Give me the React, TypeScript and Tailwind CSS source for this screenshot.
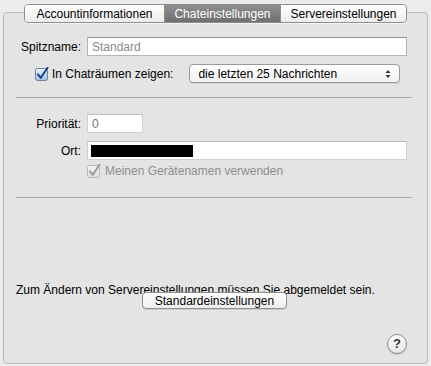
import React from "react";

function CheckBox({ disabled }: { disabled?: boolean }) {
  const stroke = disabled ? "#9a9a9a" : "#1f3f8f";
  return (
    <svg width="14" height="14" viewBox="0 0 14 14" className="shrink-0">
      <defs>
        <linearGradient id={disabled ? "cbd" : "cb"} x1="0" y1="0" x2="0" y2="1">
          <stop offset="0" stopColor={disabled ? "#f4f4f4" : "#eaf2fb"} />
          <stop offset="1" stopColor={disabled ? "#e0e0e0" : "#9fc3ea"} />
        </linearGradient>
      </defs>
      <rect x="0.5" y="1.5" width="12" height="12" rx="2" fill={`url(#${disabled ? "cbd" : "cb"})`} stroke={disabled ? "#b8b8b8" : "#6e7f99"} />
      <path d="M3 7.5 L5.8 10.8 L12.5 0.8" fill="none" stroke={stroke} strokeWidth="2" strokeLinecap="round" strokeLinejoin="round" />
    </svg>
  );
}

export default function App() {
  const tabs = [
    { label: "Accountinformationen", w: "w-[139px]" },
    { label: "Chateinstellungen", w: "w-[116px]", active: true },
    { label: "Servereinstellungen", w: "w-[126px]" },
  ];

  return (
    <div
      className="w-[431px] h-[366px] bg-[#ececec] pt-[12px] px-[3px] text-[12px] leading-[16px] text-black overflow-hidden"
      style={{ fontFamily: '"Liberation Sans", Arial, sans-serif' }}
    >
      <div className="h-[352px] border border-[#b9b9b9] rounded-[4px] bg-[#e4e4e4] flex flex-col">
        {/* tab strip */}
        <div className="-mt-[9px] self-center flex h-[19px] rounded-[4px] border border-[#8e8e8e] overflow-hidden shadow-[0_1px_0_rgba(255,255,255,0.6)]">
          {tabs.map((t, i) => (
            <div
              key={t.label}
              className={`${t.w} flex items-center justify-center ${
                t.active
                  ? "bg-gradient-to-b from-[#8f8f8f] to-[#6f6f6f] text-white"
                  : "bg-gradient-to-b from-white to-[#ececec] text-black"
              } ${i > 0 ? "border-l border-[#8e8e8e]" : ""}`}
            >
              {t.label}
            </div>
          ))}
        </div>

        {/* Spitzname */}
        <div className="mt-[14px] flex items-center">
          <div className="w-[77px] text-right">Spitzname:</div>
          <div className="ml-[6px] w-[320px] h-[19px] bg-white border border-[#b5b5b5] border-t-[#8f8f8f] pl-[4px] flex items-center text-[#8a8a8a]">
            Standard
          </div>
        </div>

        {/* Chaträume */}
        <div className="mt-[8px] flex items-center h-[19px]">
          <div className="ml-[31px] flex items-center gap-[3px]">
            <CheckBox />
            <span>In Chaträumen zeigen:</span>
          </div>
          <div className="ml-[16px] w-[211px] h-[19px] rounded-[4px] border border-[#9a9a9a] bg-gradient-to-b from-white to-[#f0f0f0] flex items-center pl-[8px] pr-[8px] shadow-[0_1px_0_rgba(0,0,0,0.08)]">
            <span className="flex-1">die letzten 25 Nachrichten</span>
            <svg width="6" height="10" viewBox="0 0 6 10">
              <path d="M0.5 4 L3 1 L5.5 4 Z" fill="#333" />
              <path d="M0.5 6 L3 9 L5.5 6 Z" fill="#333" />
            </svg>
          </div>
        </div>

        <div className="mt-[14px] ml-[12px] w-[396px] h-px bg-[#a9a9a9]" />

        {/* Priorität */}
        <div className="mt-[16px] flex items-center">
          <div className="w-[77px] text-right">Priorität:</div>
          <div className="ml-[6px] w-[56px] h-[19px] bg-white border border-[#d0d0d0] border-t-[#bdbdbd] pl-[4px] flex items-center text-[#7a6f80]">
            0
          </div>
        </div>

        {/* Ort */}
        <div className="mt-[8px] flex items-center">
          <div className="w-[77px] text-right">Ort:</div>
          <div className="ml-[6px] w-[320px] h-[19px] bg-white border border-[#d0d0d0] border-t-[#bdbdbd] pl-[3px] flex items-center">
            <div className="w-[102px] h-[12px] bg-black" />
          </div>
        </div>

        {/* Gerätenamen */}
        <div className="mt-[3px] ml-[83px] flex items-center gap-[4px] text-[#8e8e8e]">
          <CheckBox disabled />
          <span>Meinen Gerätenamen verwenden</span>
        </div>

        <div className="mt-[18px] ml-[12px] w-[396px] h-px bg-[#a9a9a9]" />

        <div className="mt-[84px] ml-[12px] h-[16px]">
          Zum Ändern von Servereinstellungen müssen Sie abgemeldet sein.
        </div>

        <div className="-mt-[6px] ml-[138px] w-[145px] h-[17px] rounded-[4px] border border-[#8f8f8f] bg-gradient-to-b from-white to-[#eeeeee] flex items-center justify-center shadow-[0_1px_0_rgba(0,0,0,0.1)]">
          Standardeinstellungen
        </div>

        <div className="mt-[25px] ml-[383px] w-[20px] h-[20px] rounded-full border border-[#8c8c8c] bg-gradient-to-b from-white to-[#e6e6e6] flex items-center justify-center font-bold text-[13px] text-[#333] shadow-[0_1px_1px_rgba(0,0,0,0.15)]">
          ?
        </div>
      </div>
    </div>
  );
}
